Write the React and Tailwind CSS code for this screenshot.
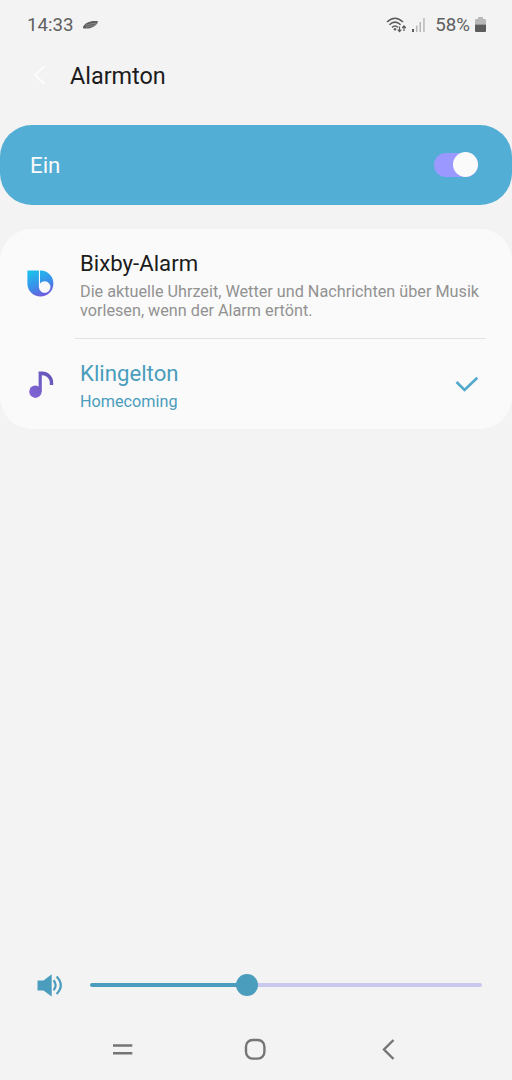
import React, { useState } from 'react';

const StatusBar = () => (
  <div className="h-[50px] pl-[27px] pr-[26px] flex items-center justify-between text-[#606060] text-[18.7px] leading-none">
    <div className="flex items-center">
      <span>14:33</span>
      <svg width="18" height="12" viewBox="0 0 18 12" className="ml-2">
        <path d="M1 8.2C2.5 4 9 1.2 16.2 2.4 14.5 7.5 7.5 10.4 1.6 9.4Q.8 9 1 8.2z" fill="#5c5c5c" />
        <path d="M3.5 6.4Q9 4.6 14.5 4M4 8.2Q10 7 14 5.6" fill="none" stroke="#a8a8a8" strokeWidth="0.6" />
      </svg>
    </div>
    <div className="flex items-center">
      <svg width="21" height="18" viewBox="0 0 21 18" fill="none" stroke="#5c5c5c" strokeWidth="1.5">
        <path d="M1 6Q9 -1.6 17 6M3.4 8.8Q9 3.4 14.6 8.8M6 11.4Q9 8.6 12 11.4" />
        <circle cx="9" cy="13.2" r="1.3" fill="#5c5c5c" stroke="none" />
        <path d="M13.5 10.6V15.6M11.7 13.6 13.5 15.6 15.3 13.6M18 15V10M16.2 12 18 10 19.8 12" strokeWidth="1.2" />
      </svg>
      <svg width="14" height="16" viewBox="0 0 14 16" className="ml-1">
        <rect x="1" y="12" width="2" height="3" fill="#5c5c5c" />
        <rect x="5" y="8.5" width="1.5" height="6.5" fill="#b8b8b8" />
        <rect x="8.5" y="5" width="1.5" height="10" fill="#b8b8b8" />
        <rect x="12.2" y="1" width="1.5" height="14" fill="#b8b8b8" />
      </svg>
      <span className="ml-2.5">58%</span>
      <svg width="11" height="16" viewBox="0 0 11 16" className="ml-[5px]">
        <path d="M3 0h5v2h2q1 0 1 1v4.5H0V3q0-1 1-1h2z" fill="#b8b8b8" />
        <path d="M0 7.5h11V14q0 1-1 1H1q-1 0-1-1z" fill="#5c5c5c" />
      </svg>
    </div>
  </div>
);

const BixbyIcon = () => (
  <svg width="28" height="28" viewBox="0 0 28 28" className="mt-px">
    <defs>
      <linearGradient id="bixby" x1="0.3" y1="0" x2="0.7" y2="1">
        <stop offset="0" stopColor="#1fbdea" />
        <stop offset="0.5" stopColor="#3792ea" />
        <stop offset="1" stopColor="#7555dc" />
      </linearGradient>
    </defs>
    <path d="M.6 .5H13.7A13 13 0 1 1 .4 13.7V.7Q.4 .5 .6 .5z" fill="url(#bixby)" />
    <path d="M11.9 0H13V13.6A5.8 5.8 0 1 1 11.9 17.6z" fill="#fafafa" />
  </svg>
);

const NoteIcon = () => (
  <svg width="26" height="28" viewBox="0 0 26 28">
    <defs>
      <linearGradient id="note" gradientUnits="userSpaceOnUse" x1="0" y1="28" x2="24" y2="2">
        <stop offset="0" stopColor="#8466d8" />
        <stop offset="1" stopColor="#6155b5" />
      </linearGradient>
    </defs>
    <circle cx="6.4" cy="21.7" r="6.2" fill="url(#note)" />
    <path d="M9.6 1.6H13A11 11 0 0 1 24.2 12.6V15H20.8V12.6A7.6 7.6 0 0 0 12.8 5.2V21.7H9.6z" fill="url(#note)" />
  </svg>
);

const Toggle = ({ on, onChange }) => (
  <button
    type="button"
    role="switch"
    aria-checked={on}
    onClick={() => onChange(!on)}
    className={`w-[44px] h-6 mb-px rounded-full flex items-center ${on ? 'bg-[#9b99ff] justify-end' : 'bg-gray-300 justify-start'}`}
  >
    <span className="w-[25px] h-[25px] shrink-0 rounded-full bg-[#fafafa]" />
  </button>
);

const VolumeSlider = ({ value }) => (
  <div className="h-[54px] pl-[37px] pr-[30px] flex items-center">
    <svg width="27" height="24" viewBox="0 0 27 24" fill="none" stroke="#4a9dbd" strokeWidth="2.2">
      <path d="M.5 8Q.5 7.5 1 7.5H6.5L14.7 1.3V23.4L6.5 17.4H1Q.5 17.4 .5 16.9z" fill="#4a9dbd" stroke="none" />
      <path d="M16.6 7.2Q20.6 12.2 16.6 17.2M19.6 3.5Q28 12.2 19.6 20.9" />
    </svg>
    <div className="ml-[25.5px] flex-1 flex items-center">
      <div className="h-1 rounded-l-full bg-[#4a9dbd]" style={{ width: `${value}%` }} />
      <div className="w-[22px] h-[22px] -mx-[11px] shrink-0 rounded-full bg-[#4a9dbd] z-10" />
      <div className="h-1 flex-1 rounded-r-full bg-[#c9c8ee]" />
    </div>
  </div>
);

const NavBar = () => (
  <div className="h-[68px] pt-1.5 flex items-center justify-center">
    <svg width="290" height="24" viewBox="0 0 290 24" fill="none" stroke="#757575" strokeWidth="2.4">
      <path d="M2 8.5H21.3M2 16.3H21.3" />
      <rect x="135" y="3" width="18.4" height="18.6" rx="6.5" />
      <path d="M282.5 3 273 12.5 282.5 22" />
    </svg>
  </div>
);

export default function App() {
  const [enabled, setEnabled] = useState(true);

  return (
    <div className="w-full h-[1080px] bg-[#f3f3f3] flex flex-col font-['Roboto',sans-serif]">
      <StatusBar />

      <header className="h-[75px] pb-[23px] pl-8 flex items-center">
        <svg width="16" height="20" viewBox="0 0 16 20" fill="none" stroke="#fcfcfc" strokeWidth="1.8">
          <path d="M12.5 0 3 9 12.5 18" />
        </svg>
        <h1 className="ml-[22px] text-[23.4px] leading-7 text-[#1c1c1c]">Alarmton</h1>
      </header>

      <div className="h-20 shrink-0 rounded-[32px] bg-[#52aed4] pl-[30px] pr-[34px] flex items-center justify-between">
        <span className="text-[22.3px] leading-7 text-[#fafafa]">Ein</span>
        <Toggle on={enabled} onChange={setEnabled} />
      </div>

      <main className="mt-6 h-[200px] shrink-0 rounded-[32px] bg-[#fafafa]">
        <div className="h-[109px] pl-[27px] flex items-center">
          <BixbyIcon />
          <div className="ml-[25px] pt-0.5">
            <h2 className="text-[22.2px] leading-7 text-[#1c1c1c]">Bixby-Alarm</h2>
            <p className="mt-[5px] text-[16.22px] leading-[19px] text-[#929292] whitespace-nowrap">
              Die aktuelle Uhrzeit, Wetter und Nachrichten über Musik
              <br />
              vorlesen, wenn der Alarm ertönt.
            </p>
          </div>
        </div>
        <div className="h-px ml-[75px] mr-[26px] bg-[#e2e2e2]" />
        <div className="h-[90px] pl-[29px] pr-[33px] flex items-center text-[#4a9dbd]">
          <NoteIcon />
          <div className="ml-[25px] pt-0.5 flex-1">
            <h2 className="text-[22.2px] leading-7">Klingelton</h2>
            <p className="mt-[5px] text-[16.22px] leading-[19px]">Homecoming</p>
          </div>
          <svg width="24" height="16" viewBox="0 0 24 16" fill="none" stroke="#52a9cb" strokeWidth="2.6">
            <path d="M1.5 6 9.5 14 22.3 1.7" />
          </svg>
        </div>
      </main>

      <div className="flex-1" />
      <VolumeSlider value={40} />
      <NavBar />
    </div>
  );
}
